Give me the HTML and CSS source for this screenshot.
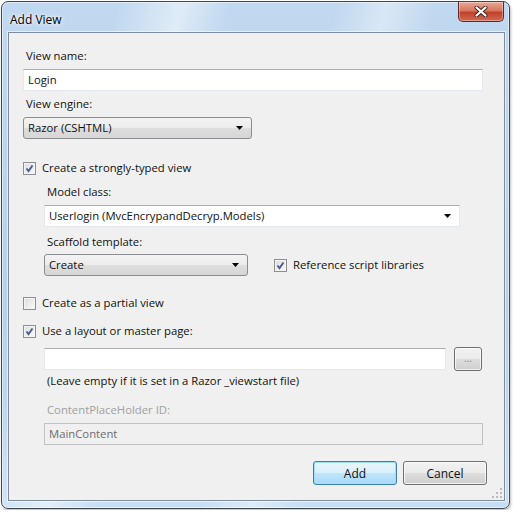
FILE: index.html
```html
<!DOCTYPE html>
<html lang="en">
<head>
  <meta charset="UTF-8">
  <title>Add View</title>
  <link rel="stylesheet" href="styles.css">
</head>
<body>
  <div class="window">
    <div class="titlebar">
      <span class="title">Add View</span>
      <span class="close">
        <svg width="14" height="11" viewBox="0 0 14 11">
          <path d="M2.5 1.5 L11.5 9.5 M11.5 1.5 L2.5 9.5" stroke="#3a2420" stroke-width="4" stroke-linecap="round"/>
          <path d="M2.5 1.5 L11.5 9.5 M11.5 1.5 L2.5 9.5" stroke="#fff" stroke-width="2.2" stroke-linecap="round"/>
        </svg>
      </span>
    </div>

    <div class="client">
      <div class="label">View name:</div>
      <div class="textbox name-box">Login</div>

      <div class="label gap-5">View engine:</div>
      <div class="combo engine-box">
        <span>Razor (CSHTML)</span>
        <svg class="arrow" width="7" height="4" viewBox="0 0 7 4"><path d="M0 0 H7 L3.5 4 Z" fill="#000"/></svg>
      </div>

      <div class="check-row typed-row">
        <span class="checkbox checked"></span>
        <span>Create a strongly-typed view</span>
      </div>

      <div class="indent">
        <div class="label model-label">Model class:</div>
        <div class="textbox model-box">
          <span>Userlogin (MvcEncrypandDecryp.Models)</span>
          <svg class="arrow" width="7" height="4" viewBox="0 0 7 4"><path d="M0 0 H7 L3.5 4 Z" fill="#000"/></svg>
        </div>

        <div class="label scaffold-label">Scaffold template:</div>
        <div class="scaffold-row">
          <div class="combo scaffold-box">
            <span>Create</span>
            <svg class="arrow" width="7" height="4" viewBox="0 0 7 4"><path d="M0 0 H7 L3.5 4 Z" fill="#000"/></svg>
          </div>
          <div class="check-row">
            <span class="checkbox checked"></span>
            <span>Reference script libraries</span>
          </div>
        </div>
      </div>

      <div class="check-row partial-row">
        <span class="checkbox"></span>
        <span>Create as a partial view</span>
      </div>
      <div class="check-row layout-row">
        <span class="checkbox checked"></span>
        <span>Use a layout or master page:</span>
      </div>

      <div class="indent">
        <div class="layout-pick">
          <div class="textbox layout-box"></div>
          <div class="button browse">...</div>
        </div>
        <div class="note">(Leave empty if it is set in a Razor _viewstart file)</div>

        <div class="label disabled placeholder-label">ContentPlaceHolder ID:</div>
        <div class="textbox disabled-box">MainContent</div>
      </div>

      <div class="actions">
        <div class="button default">Add</div>
        <div class="button">Cancel</div>
      </div>

      <svg class="grip" width="10" height="10" viewBox="0 0 10 10">
        <g fill="#b8bcc2">
          <rect x="8" y="0" width="2" height="2"/>
          <rect x="4" y="4" width="2" height="2"/>
          <rect x="8" y="4" width="2" height="2"/>
          <rect x="0" y="8" width="2" height="2"/>
          <rect x="4" y="8" width="2" height="2"/>
          <rect x="8" y="8" width="2" height="2"/>
        </g>
      </svg>
    </div>
  </div>
</body>
</html>
```

FILE: styles.css
```css
body {
  margin: 0;
  padding: 1px;
  background: #fff;
  font-family: 'Open Sans', 'Noto Sans', sans-serif;
  font-size: 11.3px;
  color: #111;
}

.window {
  box-sizing: border-box;
  width: 509px;
  height: 508px;
  border: 1px solid #3e4650;
  border-radius: 7px;
  padding: 0 4px 7px 6px;
  display: flex;
  flex-direction: column;
  background:
    linear-gradient(105deg, rgba(255,255,255,0) 18%, rgba(255,255,255,0.5) 28%, rgba(255,255,255,0) 36%,
      rgba(255,255,255,0) 52%, rgba(255,255,255,0.4) 60%, rgba(255,255,255,0) 68%),
    linear-gradient(to bottom, #c0d8f0, #b6d1ec 60%, #c8def3);
  box-shadow: 1px 2px 3px rgba(0,0,0,0.25), inset 0 0 0 1px rgba(255,255,255,0.5);
}

.titlebar {
  height: 30px;
  display: flex;
  justify-content: space-between;
  align-items: flex-start;
}

.title {
  margin: 9px 0 0 2px;
  font-size: 12px;
  color: #000;
  text-shadow: 0 0 6px #fff, 0 0 3px #fff;
}

.close {
  width: 46px;
  height: 20px;
  box-sizing: border-box;
  margin-right: 1px;
  border: 1px solid #5e2b24;
  border-top: none;
  border-radius: 0 0 5px 5px;
  background: linear-gradient(to bottom, #e9a999, #d7765f 45%, #c0412b 55%, #d16a52);
  box-shadow: inset 0 0 0 1px rgba(255,255,255,0.35);
  display: flex;
  align-items: center;
  justify-content: center;
}

.client {
  position: relative;
  flex: 1;
  border: 1px solid #7d8c9d;
  box-shadow: 0 0 0 1px rgba(255,255,255,0.6);
  background: #f0f0f0;
  padding: 15px 17px 0 14px;
}

.label {
  line-height: 16px;
  padding-left: 3px;
}

.gap-5 { margin-top: 5px; }

.textbox, .combo {
  box-sizing: border-box;
  height: 22px;
  margin-top: 5px;
  padding: 0 8px 0 4px;
  display: flex;
  align-items: center;
  justify-content: space-between;
  line-height: 16px;
}

.textbox {
  background: #fff;
  border: 1px solid #e2e8ee;
  border-top-color: #abadb3;
}

.combo {
  border: 1px solid #8b8d90;
  border-radius: 3px;
  background: linear-gradient(to bottom, #f3f3f3, #ececec 50%, #dedede 51%, #d6d6d6);
}

.name-box { width: 460px; }
.engine-box { width: 229px; }

.check-row {
  display: flex;
  align-items: center;
  gap: 6px;
  line-height: 16px;
}

.typed-row { margin-top: 21px; }
.partial-row { margin-top: 19px; }
.layout-row { margin-top: 12px; }

.checkbox {
  box-sizing: border-box;
  width: 13px;
  height: 13px;
  border: 1px solid #8f8f8f;
  background: linear-gradient(135deg, #dcdcdc, #fbfbfb);
  box-shadow: inset 0 0 0 1px #f4f4f4;
}

.checkbox.checked {
  background:
    url("data:image/svg+xml,%3Csvg xmlns='http://www.w3.org/2000/svg' width='11' height='11'%3E%3Cpath d='M2.5 5.5 L4.5 8 L8.5 2.5' fill='none' stroke='%234a5f97' stroke-width='2'/%3E%3C/svg%3E") center no-repeat,
    linear-gradient(135deg, #dcdcdc, #fbfbfb);
}

.indent { padding-left: 21px; }

.model-label { margin-top: 8px; }
.model-box { width: 416px; }

.scaffold-label { margin-top: 7px; }

.scaffold-row {
  margin-top: 4px;
  display: flex;
  align-items: center;
  gap: 26px;
}

.scaffold-row .combo { margin-top: 0; }
.scaffold-box { width: 204px; }

.layout-pick {
  margin-top: 8px;
  display: flex;
  align-items: center;
  gap: 8px;
}

.layout-pick .textbox { margin-top: 0; }
.layout-box { width: 402px; }

.button {
  box-sizing: border-box;
  height: 24px;
  border: 1px solid #707070;
  border-radius: 3px;
  background: linear-gradient(to bottom, #f2f2f2, #ebebeb 48%, #dddddd 52%, #cfcfcf);
  box-shadow: inset 0 0 0 1px rgba(255,255,255,0.7);
  display: flex;
  align-items: center;
  justify-content: center;
  width: 84px;
  font-size: 12px;
}

.browse {
  width: 28px;
  color: #8a8a8a;
  font-size: 10px;
  padding-bottom: 2px;
}

.note {
  margin-top: 2px;
  line-height: 16px;
  padding-left: 3px;
}

.disabled { color: #a0a0a0; }
.placeholder-label { margin-top: 13px; }

.disabled-box {
  width: 439px;
  background: #f0f0f0;
  border-color: #c2c2c2;
  color: #6d6d6d;
}

.actions {
  margin-top: 16px;
  display: flex;
  justify-content: flex-end;
  gap: 6px;
}

.button.default {
  border-color: #3c7fb1;
  background: linear-gradient(to bottom, #eaf6fd, #d9f0fc 48%, #bee6fd 52%, #a7d9f5);
  box-shadow: inset 0 0 0 1px #9edef9;
}

.grip {
  position: absolute;
  right: 2px;
  bottom: 2px;
}
```
